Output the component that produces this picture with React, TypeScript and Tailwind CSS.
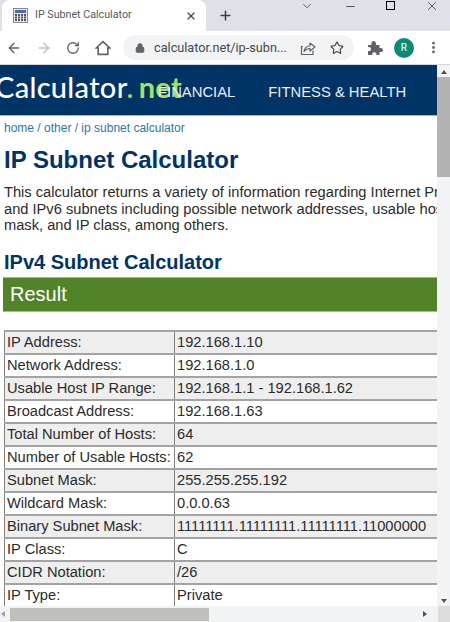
import { ArrowLeft, ArrowRight, Lock, Minus, Plus, RotateCw, Star, X, ChevronDown, MoreVertical } from "lucide-react";

const rows = [
  ["IP Address:", "192.168.1.10"],
  ["Network Address:", "192.168.1.0"],
  ["Usable Host IP Range:", "192.168.1.1 - 192.168.1.62"],
  ["Broadcast Address:", "192.168.1.63"],
  ["Total Number of Hosts:", "64"],
  ["Number of Usable Hosts:", "62"],
  ["Subnet Mask:", "255.255.255.192"],
  ["Wildcard Mask:", "0.0.0.63"],
  ["Binary Subnet Mask:", "11111111.11111111.11111111.11000000"],
  ["IP Class:", "C"],
  ["CIDR Notation:", "/26"],
  ["IP Type:", "Private"],
];

function Favicon() {
  return (
    <svg width="15" height="15" viewBox="0 0 15 15" className="shrink-0">
      <rect x="0.5" y="0.5" width="14" height="14" fill="#e8e8f0" stroke="#8a8a92" />
      <rect x="2" y="2" width="11" height="3" fill="#4a6da6" />
      {[2, 5, 8, 11].map((x) =>
        [6, 8.5, 11].map((y) => <rect key={`${x}-${y}`} x={x} y={y} width="2" height="2" fill="#55555f" />)
      )}
    </svg>
  );
}

function HomeIcon() {
  return (
    <svg width="16" height="16" viewBox="0 0 16 16" fill="none" stroke="#5f6368" strokeWidth="1.6" className="ml-[15px] shrink-0">
      <path d="M1.2 8 8 1.6 14.8 8H12.8V14.4H3.2V8Z" strokeLinejoin="miter" />
    </svg>
  );
}

function ShareIcon() {
  return (
    <svg width="16" height="16" viewBox="0 0 16 16" fill="none" stroke="#5f6368" strokeWidth="1.2" className="ml-[13px] shrink-0">
      <path d="M3 6.5H1.5V14.5H13V10.5" />
      <path d="M4 11.5C4.5 8 7 6 10 6V3L15 7L10 11V8.5C7.5 8.5 5.5 9.5 4 11.5Z" strokeLinejoin="round" />
    </svg>
  );
}

function PuzzleIcon() {
  return (
    <svg width="16" height="16" viewBox="0 0 16 16" fill="#5f6368" className="ml-[13px] shrink-0">
      <path d="M1 5H4.5C4 2 5.5 1 6.7 1S9.4 2 8.9 5H12.5V8C15.5 7.5 16 9 16 10S15.5 12.5 12.5 12V15H9.3C9.7 13 8.5 12.3 7.3 12.3S4.9 13 5.3 15H1V11C3 11.4 4 10.3 4 9S3 6.6 1 7Z" />
    </svg>
  );
}

function BrowserChrome() {
  return (
    <>
      <div className="flex h-[31px] shrink-0 bg-[#dee1e6]">
        <div className="ml-[2px] flex h-[31px] w-[204px] items-center rounded-t-lg bg-white pl-[11px] pr-[9px]">
          <Favicon />
          <span className="ml-[7px] flex-1 font-['Roboto',sans-serif] text-[10.7px] text-[#55585c] whitespace-nowrap">IP Subnet Calculator</span>
          <X size={12} strokeWidth={2.4} className="text-[#45474b]" />
        </div>
        <Plus size={15} strokeWidth={2.4} className="ml-[12px] mt-[8px] text-[#3c4043]" />
        <div className="ml-auto flex text-[#3c4043]">
          <ChevronDown size={14} strokeWidth={1.6} className="mr-[30px] mt-[-1px] text-[#55585c]" />
          <Minus size={13} strokeWidth={1.6} className="mr-[29px] mt-0" />
          <div className="mr-[30px] mt-[1px] h-[9px] w-[9px] border border-black" />
          <X size={14} strokeWidth={1.4} className="mr-[11px] mt-[-1px]" />
        </div>
      </div>
      <div className="flex h-[34px] shrink-0 items-center border-b border-[#d5d7db] bg-white text-[#5f6368]">
        <ArrowLeft size={16} strokeWidth={2} className="ml-[6px] shrink-0" />
        <ArrowRight size={16} strokeWidth={2} className="ml-[14px] shrink-0 text-[#bcbfc4]" />
        <RotateCw size={14} strokeWidth={2.2} className="ml-[14px] shrink-0" />
        <HomeIcon />
        <div className="ml-[12px] flex h-[25px] w-[231px] shrink-0 items-center rounded-full bg-[#f1f3f4] pl-[12px]">
          <Lock size={10} strokeWidth={2.5} fill="#5f6368" className="shrink-0" />
          <span className="ml-[9px] font-['Roboto',sans-serif] text-[12.7px] text-[#45474b] whitespace-nowrap">calculator.net/ip-subn...</span>
          <ShareIcon />
          <Star size={14} strokeWidth={2} className="ml-[14px] shrink-0 text-[#45474b]" />
        </div>
        <PuzzleIcon />
        <div className="ml-[11px] flex h-[20px] w-[20px] shrink-0 items-center justify-center rounded-full bg-[#0b8a76] font-['Roboto',sans-serif] text-[10px] font-medium text-[#d8ece8]">
          R
        </div>
        <MoreVertical size={15} strokeWidth={2.5} className="ml-[12px] shrink-0" />
      </div>
    </>
  );
}

function PageContent() {
  return (
    <div className="min-w-0 flex-1 overflow-hidden font-['Liberation_Sans',Arial,sans-serif]">
      <div className="flex h-[51px] items-center whitespace-nowrap border-b border-[#9db4c9] bg-[#003366] pt-[5px]">
        <span className="mb-[12px] ml-[-5px] w-[163px] font-['Lato',sans-serif] text-[29px] font-medium leading-none tracking-[0.3px] text-white">
          Calculator<span className="text-[#a6e05f]">.</span>
          <span className="ml-[5px] font-bold text-[#a6e05f]">net</span>
        </span>
        <span className="text-[14.8px] text-[#e8edf2]">FINANCIAL</span>
        <span className="ml-[33px] text-[14.8px] text-[#e8edf2]">FITNESS &amp; HEALTH</span>
      </div>
      <div className="pl-[4px] pt-[5px] text-[12px] leading-[14px] text-[#2a78a8] whitespace-nowrap">home / other / ip subnet calculator</div>
      <h1 className="mt-[11px] whitespace-nowrap pl-[4px] text-[24px] font-bold leading-[27px] text-[#003366]">IP Subnet Calculator</h1>
      <p className="mt-[11px] whitespace-nowrap pl-[4px] text-[14.67px] leading-[16.5px] text-[#2b2b2b]">
        This calculator returns a variety of information regarding Internet Protocol (IP)
        <br />
        and IPv6 subnets including possible network addresses, usable host ranges, subnet
        <br />
        mask, and IP class, among others.
      </p>
      <h2 className="mt-[17px] whitespace-nowrap pl-[4px] text-[20px] font-bold leading-[22px] text-[#003366]">IPv4 Subnet Calculator</h2>
      <div className="ml-[3px] mt-[4px] flex h-[35px] items-center border-y border-[#a9b8a0] bg-[#518428] pl-[7px] text-[20px] text-white">
        Result
      </div>
      <div className="ml-[4px] mt-[18px] border-t-2 border-[#a3a3a3]">
        {rows.map(([label, value], i) => (
          <div key={label} className={`flex h-[23px] border-b-2 border-[#a3a3a3] text-[14.67px] leading-[21px] text-[#2b2b2b] ${i % 2 === 0 ? "bg-[#eeeeee]" : "bg-white"}`}>
            <div className="w-[171px] shrink-0 border-x border-[#808080] pl-[2px] whitespace-nowrap">{label}</div>
            <div className="pl-[2px] whitespace-nowrap">{value}</div>
          </div>
        ))}
      </div>
    </div>
  );
}

function VerticalScrollbar() {
  return (
    <div className="flex w-[13px] shrink-0 flex-col items-center bg-[#f1f3f4]">
      <div className="mt-[5px] h-0 w-0 border-x-[3.5px] border-b-[4px] border-x-transparent border-b-[#505050]" />
      <div className="mt-[3px] h-[100px] w-full bg-[#b3b3b3]" />
      <div className="mt-auto mb-[3px] h-0 w-0 border-x-[3.5px] border-t-[4px] border-x-transparent border-t-[#505050]" />
    </div>
  );
}

export default function App() {
  return (
    <div className="flex h-[622px] w-[450px] flex-col overflow-hidden bg-white">
      <BrowserChrome />
      <div className="flex min-h-0 flex-1">
        <PageContent />
        <VerticalScrollbar />
      </div>
      <div className="flex h-[16px] shrink-0 items-center bg-[#f1f3f4]">
        <div className="ml-[1px] h-0 w-0 border-y-[3.5px] border-r-[4px] border-y-transparent border-r-[#a0a0a0]" />
        <div className="ml-[5px] h-[13px] w-[199px] bg-[#c0c0ba]" />
        <div className="ml-auto mr-[11px] h-0 w-0 border-y-[3.5px] border-l-[4px] border-y-transparent border-l-[#505050]" />
        <div className="h-[16px] w-[12px] bg-[#dcdcdc]" />
      </div>
    </div>
  );
}
